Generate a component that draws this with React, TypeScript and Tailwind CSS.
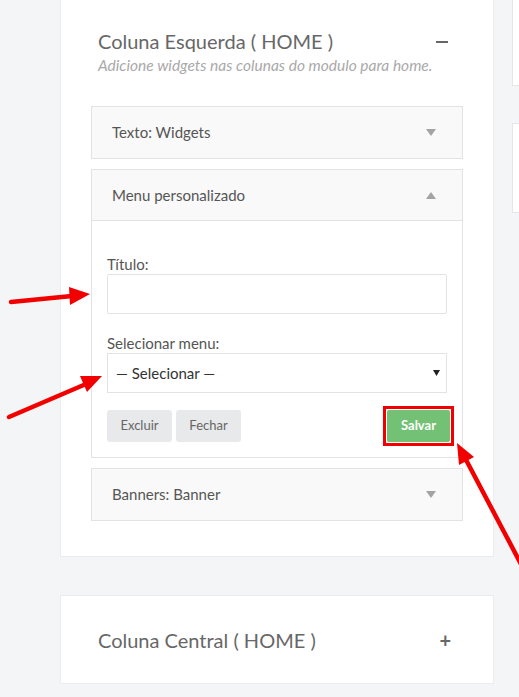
import React from 'react';

const font = { fontFamily: 'Lato, "Open Sans", sans-serif' };

type ItemProps = {
  title: string;
  open?: boolean;
  children?: React.ReactNode;
};

const Caret = ({ up }: { up?: boolean }) => (
  <svg width="10" height="7" viewBox="0 0 10 7" className="mr-[26px]">
    {up ? (
      <polygon points="5,0 10,7 0,7" fill="#a3a3a3" />
    ) : (
      <polygon points="0,0 10,0 5,7" fill="#a3a3a3" />
    )}
  </svg>
);

const WidgetItem = ({ title, open, children }: ItemProps) => (
  <div className="border border-[#e3e3e3] bg-white">
    <div
      className={
        'flex h-[51px] items-center justify-between bg-[#f9f9f9] pl-[20px] ' +
        (open ? 'border-b border-[#e3e3e3]' : '')
      }
    >
      <span className="text-[15px] text-[#555]">{title}</span>
      <Caret up={open} />
    </div>
    {children}
  </div>
);

const Arrows = () => (
  <svg
    className="pointer-events-none absolute left-0 top-0"
    width="519"
    height="697"
    viewBox="0 0 519 697"
  >
    <line x1="11" y1="302" x2="72" y2="296" stroke="#f20000" strokeWidth="4.5" strokeLinecap="round" />
    <polygon points="69,287 90,294 70,305" fill="#f20000" />
    <line x1="9" y1="417" x2="86" y2="384" stroke="#f20000" strokeWidth="4.5" strokeLinecap="round" />
    <polygon points="80,376 102,376 87,392" fill="#f20000" />
    <line x1="522" y1="566" x2="464" y2="456" stroke="#f20000" strokeWidth="4.5" strokeLinecap="round" />
    <polygon points="457,443 474,457 459,465" fill="#f20000" />
  </svg>
);

export default function App() {
  return (
    <div
      className="relative flex h-[697px] w-[519px] overflow-hidden bg-[#f4f5f6]"
      style={font}
    >
      <div className="ml-[60px] flex w-[434px] shrink-0 flex-col">
        <div className="border-x border-b border-[#ececec] bg-white px-[30px] pb-[35px]">
          <div className="flex items-start justify-between pl-[7px] pt-[29px]">
            <div>
              <div className="text-[20px] leading-[24px] text-[#676767]">
                Coluna Esquerda ( HOME )
              </div>
              <div className="mt-[2px] text-[15.5px] italic leading-[20px] text-[#a9a9a9]">
                Adicione widgets nas colunas do modulo para home.
              </div>
            </div>
            <div className="mr-[15px] mt-[12px] h-[2px] w-[12px] bg-[#676767]" />
          </div>

          <div className="mt-[31px] flex flex-col gap-[10px]">
            <WidgetItem title="Texto: Widgets" />
            <WidgetItem title="Menu personalizado" open>
              <div className="px-[15px] pb-[14px] pt-[33px]">
                <label className="block text-[15px] leading-[20px] text-[#555]">
                  Título:
                </label>
                <div className="h-[40px] rounded-[2px] border border-[#e3e3e3] bg-white" />
                <label className="mt-[19px] block text-[15px] leading-[20px] text-[#555]">
                  Selecionar menu:
                </label>
                <div className="flex h-[40px] items-center justify-between border border-[#e3e3e3] bg-white pl-[8px] pr-[6px]">
                  <span className="text-[15px] text-[#333]">— Selecionar —</span>
                  <svg width="7" height="6" viewBox="0 0 7 6">
                    <polygon points="0,0 7,0 3.5,6" fill="#222" />
                  </svg>
                </div>
                <div className="mt-[16px] flex items-center justify-between">
                  <div className="flex gap-[4px]">
                    <button className="h-[32px] w-[65px] rounded-[3px] bg-[#e8e9ea] text-[13px] text-[#666]">
                      Excluir
                    </button>
                    <button className="h-[32px] w-[65px] rounded-[3px] bg-[#e8e9ea] text-[13px] text-[#666]">
                      Fechar
                    </button>
                  </div>
                  <div className="-my-[3px] mr-[-7px] border-[3px] border-[#f20000] p-[1px]">
                    <button className="h-[32px] w-[63px] rounded-[2px] bg-[#73c174] text-[13px] font-bold text-white">
                      Salvar
                    </button>
                  </div>
                </div>
              </div>
            </WidgetItem>
            <WidgetItem title="Banners: Banner" />
          </div>
        </div>

        <div className="mt-[38px] flex h-[89px] items-center justify-between border border-[#ececec] bg-white pl-[37px] pr-[42px]">
          <span className="text-[20px] text-[#676767]">Coluna Central ( HOME )</span>
          <span className="text-[20px] font-bold leading-none text-[#676767]">+</span>
        </div>
      </div>

      <div className="ml-[18px] flex w-[40px] shrink-0 flex-col">
        <div className="h-[86px] border-b border-l border-[#e6e6e6] bg-white" />
        <div className="mt-[37px] h-[90px] border-y border-l border-[#e6e6e6] bg-white" />
      </div>

      <Arrows />
    </div>
  );
}
